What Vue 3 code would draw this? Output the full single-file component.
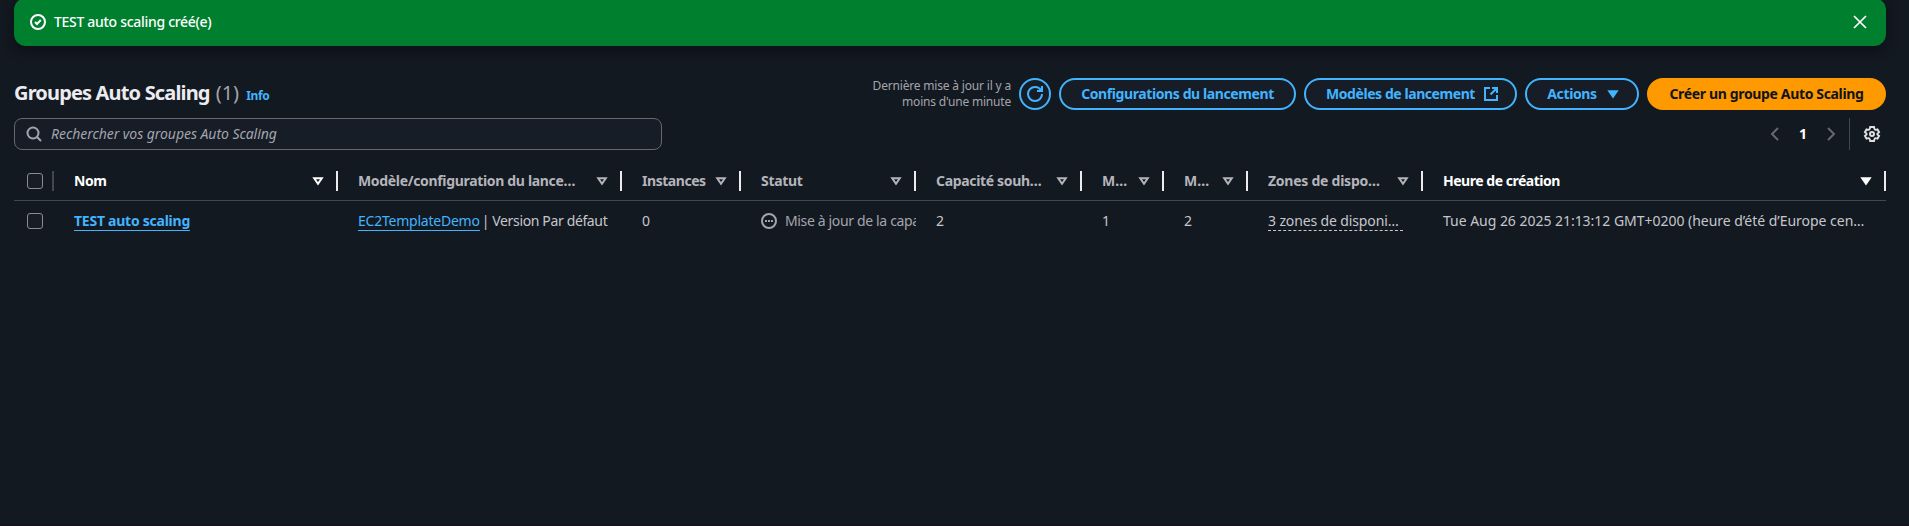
<script setup>
const columns = [
  { key: 'name', label: 'Nom', w: 284, strong: true, tx: 'h-nom' },
  { key: 'tpl', label: 'Modèle/configuration du lance…', w: 284, tx: 'h-tpl' },
  { key: 'inst', label: 'Instances', w: 119, tx: 'h-inst' },
  { key: 'status', label: 'Statut', w: 175, tx: 'h-stat' },
  { key: 'cap', label: 'Capacité souh…', w: 166, tx: 'h-cap' },
  { key: 'min', label: 'M…', w: 82, tx: 'h-m' },
  { key: 'max', label: 'M…', w: 84, tx: 'h-m' },
  { key: 'zones', label: 'Zones de dispo…', w: 175, tx: 'h-zone' },
  { key: 'created', label: 'Heure de création', w: 463, strong: true, sorted: true, tx: 'h-date' },
]
</script>

<template>
  <div class="page">
    <div class="flash">
      <svg class="ic" viewBox="0 0 16 16"><circle cx="8" cy="8" r="7" /><path d="m5 8 2 2 3.800-4" /></svg>
      <span class="t-flash">TEST auto scaling créé(e)</span>
      <svg class="ic close" viewBox="0 0 16 16"><path d="m2 2 12 12M14 2 2 14" /></svg>
    </div>

    <header class="head">
      <h1><span class="t-title">Groupes Auto Scaling</span><span class="count">(1)</span><a class="info">Info</a></h1>
      <div class="actions">
        <p class="updated"><span class="t-u1">Dernière mise à jour il y a</span><br /><span class="t-u2">moins d'une minute</span></p>
        <button class="btn round">
          <svg class="ic" viewBox="0 0 16 16"><path d="M10 5h5V0" /><path d="M15 8a6.957 6.957 0 0 1-7 7 6.957 6.957 0 0 1-7-7 6.957 6.957 0 0 1 7-7 6.870 6.870 0 0 1 6.300 4" /></svg>
        </button>
        <button class="btn b1"><span class="t-b1">Configurations du lancement</span></button>
        <button class="btn b2"><span class="t-b2">Modèles de lancement</span>
          <svg class="ic" viewBox="0 0 16 16"><path d="M14 9v5H2V2h5M9 2h5v5M7.500 8.500 14 2" /></svg>
        </button>
        <button class="btn b3"><span class="t-b3">Actions</span>
          <svg class="ic fill" viewBox="0 0 16 16"><path d="M4.200 5.200h7.600L8 10.800z" /></svg>
        </button>
        <button class="btn primary"><span class="t-b4">Créer un groupe Auto Scaling</span></button>
      </div>
    </header>

    <div class="tools">
      <div class="search">
        <svg class="ic" viewBox="0 0 16 16"><circle cx="7" cy="7" r="5.500" /><path d="m15 15-4.200-4.200" /></svg>
        <span class="t-search">Rechercher vos groupes Auto Scaling</span>
      </div>
      <div class="pager">
        <svg class="ic dim" viewBox="0 0 16 16"><path d="m11 2-6 6 6 6" /></svg>
        <b>1</b>
        <svg class="ic dim" viewBox="0 0 16 16"><path d="m5 2 6 6-6 6" /></svg>
        <i class="sep"></i>
        <svg class="ic gear" viewBox="0 0 16 16"><path d="M13.300 8c0-.6.8-1.200 1.700-1.900l-1.500-2.700c-1 .4-2 .6-2.500.3-.5-.3-.8-1.500-1-2.700H6.200c-.2 1.200-.6 2.400-1.100 2.700-.5.3-1.600.1-2.600-.3L1 6.100c.9.700 1.700 1.300 1.700 1.900S1.900 9.200 1 9.900l1.500 2.700c1-.4 2.100-.6 2.600-.3.5.3.9 1.500 1.100 2.700H10c.2-1.200.5-2.400 1-2.700.5-.3 1.500-.1 2.500.3L15 9.900c-.9-.7-1.700-1.300-1.700-1.900z" /><circle cx="8" cy="8" r="2" /></svg>
      </div>
    </div>

    <div class="row thead">
      <div class="cell sel"><i class="box"></i></div>
      <div v-for="c in columns" :key="c.key" class="cell" :class="{ strong: c.strong }" :style="{ width: c.w + 'px' }">
        <span :class="c.tx">{{ c.label }}</span>
        <svg class="ic sort" :class="{ fill: c.sorted }" viewBox="0 0 16 16"><path d="M4.200 5.200h7.600L8 10.800z" /></svg>
      </div>
    </div>
    <div class="row body">
      <div class="cell sel"><i class="box"></i></div>
      <div class="cell w1"><a class="link bold t-name">TEST auto scaling</a></div>
      <div class="cell w1"><a class="link t-ec">EC2TemplateDemo</a><span class="t-ver">| Version Par défaut</span></div>
      <div class="cell w2">0</div>
      <div class="cell w3 status">
        <svg class="ic" viewBox="0 0 16 16"><circle cx="8" cy="8" r="7" /><path d="M4 8h2M7 8h2M10 8h2" /></svg>
        <span class="clip"><span class="t-stat">Mise à jour de la capa</span></span>
      </div>
      <div class="cell w4">2</div>
      <div class="cell w5">1</div>
      <div class="cell w6">2</div>
      <div class="cell w3"><span class="zones">3 zones de disponi…</span></div>
      <div class="cell w7"><span class="t-date">Tue Aug 26 2025 21:13:12 GMT+0200 (heure d’été d’Europe cen…</span></div>
    </div>
  </div>
</template>

<style>
body { background: #131920; }
</style>
<style scoped>
* { box-sizing: border-box; }
.page { height: 526px; padding: 0 23px 0 14px; overflow: hidden; border-bottom: 2px solid #151320; background: #131920; color: #c6c6cd; font: 14px/20px "Noto Sans", "Open Sans", sans-serif; white-space: nowrap; }
.ic { width: 16px; height: 16px; flex: none; fill: none; stroke: currentColor; stroke-width: 2; overflow: visible; }
.fill { fill: currentColor; }
.flash { display: flex; align-items: center; gap: 8px; height: 48px; margin-top: -2px; padding: 0 18px 0 16px; border-radius: 12px; background: #00802f; color: #fff; font-weight: 500; box-shadow: 0 4px 12px rgba(5, 8, 20, .6); }
.close { margin-left: auto; stroke-width: 1.700; }
.head { display: flex; justify-content: space-between; align-items: center; height: 32px; margin-top: 32px; }
h1 { display: flex; align-items: baseline; margin: 0; font-size: 20px; line-height: 24px; color: #ebebf0; }
.count { margin-left: 6px; font-weight: 400; color: #a4a4ad; }
.info { margin-left: 7px; font-size: 12px; letter-spacing: -.3px; color: #42b4ff; }
.actions { display: flex; align-items: center; gap: 8px; }
.updated { margin: 0; text-align: right; font-size: 12px; line-height: 16px; color: #a4a4ad; }
.btn { display: flex; align-items: center; justify-content: center; height: 32px; padding: 0; border: 2px solid #42b4ff; border-radius: 16px; background: #161d26; color: #42b4ff; font: 700 14px/20px "Noto Sans", "Open Sans", sans-serif; gap: 8px; }
.round { width: 32px; }
.b1 { width: 237px; }
.b2 { width: 213px; padding-left: 4px; }
.b3 { width: 114px; padding-left: 4px; }
.primary { width: 239px; background: #ff9900; border-color: #ff9900; color: #0f141a; }
.tools { display: flex; justify-content: space-between; height: 32px; margin-top: 8px; }
.search { display: flex; align-items: center; gap: 9px; width: 648px; padding-left: 11px; border: 1px solid #656871; border-radius: 8px; background: #161d26; color: #a4a4ad; font-style: italic; }
.pager { display: flex; align-items: center; padding-right: 6px; color: #dedee3; }
.pager b { width: 30px; text-align: center; color: #fff; margin: 0 5px 0 5px; }
.dim { color: #656871; }
.sep { width: 1px; height: 32px; margin: 0 14px 0 10px; background: #424650; }
.gear { stroke-width: 2; }
.row { display: flex; align-items: center; }
.thead { height: 51px; border-bottom: 1px solid #424650; color: #b4b4bb; font-weight: 700; padding-top: 11px; }
.body { height: 40px; }
.cell { position: relative; display: flex; align-items: center; flex: none; padding-left: 20px; height: 20px; }
.thead .cell { padding-right: 10px; border-right: 2px solid #ebebf0; }
.thead .strong { color: #fff; }
.sort { margin-left: auto; }
.row .cell.sel { width: 40px; padding: 0 0 0 13px; }
.thead .cell.sel { border-color: #424650; }
.box { width: 16px; height: 16px; flex: none; border: 1px solid #8c8c94; border-radius: 3px; background: #161d26; }
.w1 { width: 284px; } .w2 { width: 119px; } .w3 { width: 175px; } .w4 { width: 166px; } .w5 { width: 82px; } .w6 { width: 84px; } .w7 { width: 463px; }
.link { color: #42b4ff; border-bottom: 1px solid #42b4ff; line-height: 18px; }
.bold { font-weight: 700; }
.status { color: #a4a4ad; gap: 8px; }
.clip { overflow: hidden; flex: 1; }
.zones { border-bottom: 1px dashed #c6c6cd; line-height: 18px; width: 135px; letter-spacing: -.13px; }
.t-flash { letter-spacing: -.3px; }
.t-title { letter-spacing: -.84px; }
.t-u1 { letter-spacing: -.18px; }
.t-u2 { letter-spacing: -.2px; }
.t-b1 { letter-spacing: -.4px; }
.t-b2 { letter-spacing: -.43px; }
.t-b3 { letter-spacing: -.35px; }
.t-b4 { letter-spacing: -.35px; }
.t-search { letter-spacing: -.05px; }
.h-nom { letter-spacing: -.4px; }
.h-tpl { letter-spacing: -.33px; }
.h-inst { letter-spacing: -.45px; }
.h-stat { letter-spacing: -.3px; }
.h-cap { letter-spacing: -.33px; }
.h-zone { letter-spacing: -.25px; }
.h-date { letter-spacing: -.48px; }
.t-name { letter-spacing: -.25px; }
.t-ec { letter-spacing: -.23px; }
.t-ver { margin-left: 2px; letter-spacing: -.36px; }
.t-stat { letter-spacing: -.35px; }
.t-date { letter-spacing: -.03px; }
</style>
